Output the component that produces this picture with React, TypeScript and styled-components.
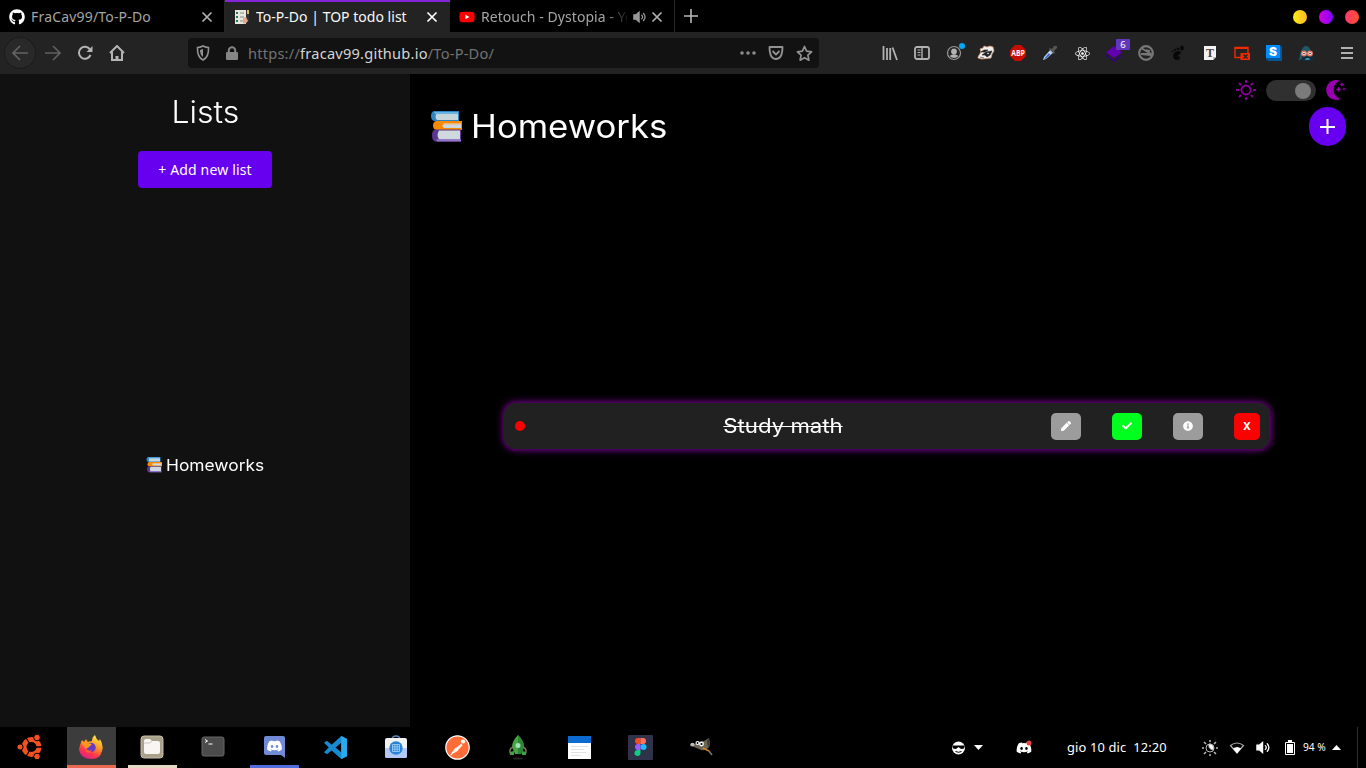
import React from 'react';
import styled, { createGlobalStyle, css } from 'styled-components';
import { FaGithub, FaYoutube, FaDiscord, FaReact, FaInfoCircle, FaCheck, FaPen } from 'react-icons/fa';

const ui = '"Noto Sans", "Open Sans", sans-serif';
const display = 'Inter, "Open Sans", sans-serif';

const Global = createGlobalStyle`
  * { box-sizing: border-box; }
  body { margin: 0; background: #000; color: #fff; font-family: ${ui}; overflow: hidden; }
  svg { display: block; flex: none; }
`;
const Screen = styled.div`width: 1366px; height: 768px; display: flex; flex-direction: column; overflow: hidden;`;

/* window tabs */
const TabStrip = styled.div`height: 32px; display: flex; align-items: stretch; background: #000;`;
const Tab = styled.div<{ $active?: boolean; $width: number }>`
  width: ${p => p.$width}px; display: flex; align-items: center; padding: 2px 0 0 9px; gap: 6px;
  font-size: 14px; color: ${p => (p.$active ? '#f9f9fa' : '#a5a5a5')};
  background: ${p => (p.$active ? '#232323' : '#000')};
  box-shadow: ${p => (p.$active ? 'inset 0 2px #8524db' : 'none')};
  border-right: ${p => (p.$active ? '0' : '1px solid #252525')};
`;
const TabTitle = styled.span<{ $width: number; $spacing: number; $fade?: boolean }>`
  width: ${p => p.$width}px; white-space: nowrap; overflow: hidden; line-height: 22px; letter-spacing: ${p => p.$spacing}px;
  ${p => p.$fade && css`mask-image: linear-gradient(to right, #000 84%, transparent 102%);`}
`;
const TabControls = styled.span`display: flex; align-items: center; gap: 4px;`;
const NewTab = styled.div`width: 32px; display: grid; place-items: center;`;
const WindowControls = styled.div`margin-left: auto; padding: 2px 7px 0 0; display: flex; align-items: center; gap: 12px;`;
const WindowDot = styled.span<{ $from: string; $to: string }>`
  width: 14px; height: 14px; border-radius: 50%; background: linear-gradient(90deg, ${p => p.$from}, ${p => p.$to});
`;
const VideoIcon = styled(FaYoutube)`background: linear-gradient(#fff, #fff) center / 6px 6px no-repeat;`;

/* navigation bar */
const Toolbar = styled.div`height: 42px; display: flex; align-items: center; background: #232323; color: #b1b1b1;`;
const NavGroup = styled.div`display: flex; align-items: center; width: 188px; padding-left: 4px;`;
const NavButton = styled.div<{ $round?: boolean }>`
  width: 32px; height: 32px; display: grid; place-items: center; border-radius: 50%;
  ${p => p.$round && css`background: #292929; box-shadow: inset 0 0 0 1px #1c1c1c; margin-right: 1px;`}
`;
const AddressBar = styled.div`
  width: 631px; height: 30px; border-radius: 4px; background: #121212; display: flex; align-items: center; padding: 0 1px 0 1px;
`;
const BarIcon = styled.div<{ $width?: number }>`width: ${p => p.$width ?? 28}px; display: grid; place-items: center; color: #8b8b8b;`;
const Url = styled.span`flex: 1; color: #727272; font-size: 14.6px; letter-spacing: 0.22px; line-height: 24px; padding-left: 1px; white-space: nowrap;`;
const Host = styled.span`color: #d5d5d5;`;
const Extensions = styled.div`margin-left: auto; padding-right: 44px; display: flex;`;
const Extension = styled.div`width: 32px; height: 32px; display: grid; place-items: center; position: relative;`;
const CountBadge = styled.span`
  position: absolute; left: 18px; top: 2px; width: 14px; height: 11px; background: #6237bd; border-radius: 1px;
  color: #fff; font-size: 9.5px; line-height: 11px; text-align: center;
`;
const MenuSlot = styled.div`width: 32px; margin-left: -35px; margin-right: 3px; display: grid; place-items: center;`;

/* page */
const Page = styled.div`height: 653px; display: flex;`;
const Sidebar = styled.aside`width: 410px; background: #111; display: flex; flex-direction: column; align-items: center;`;
const SidebarTitle = styled.h2`
  margin: 17px 0 0; font: 300 30.5px/42px ${display}; height: 60px; transform: scaleX(1.05);
`;
const AddList = styled.button`
  width: 134px; height: 37px; padding: 0; border: 0; border-radius: 4px; background: #6800f0; color: #fff;
  font: 14px/20px ${ui}; letter-spacing: 0.15px; white-space: nowrap;
`;
const Lists = styled.div`flex: 1; display: flex; align-items: center; padding-top: 14px;`;
const ListItem = styled.div`display: flex; align-items: center; gap: 4px; font: 16px/24px ${display};`;
const ListName = styled.span`width: 98px; transform: scaleX(1.085); transform-origin: left;`;
const Main = styled.main`flex: 1; display: flex; flex-direction: column; background: #000;`;
const ThemeRow = styled.div`height: 33px; display: flex; justify-content: flex-end; align-items: center; gap: 10px; padding-right: 20px;`;
const ThemeIcon = styled.span`padding-bottom: 1px;`;
const Switch = styled.div`
  width: 50px; height: 21px; border-radius: 11px; background: #303030; display: flex; align-items: center; justify-content: flex-end; padding-right: 5px;
`;
const Knob = styled.span`width: 16px; height: 16px; border-radius: 50%; background: #7b7b7b;`;
const Header = styled.header`height: 39px; display: flex; align-items: center; padding: 0 20px; gap: 8px;`;
const Heading = styled.h1`
  margin: 0 auto 0 0; padding: 1px 0 0 1px; font: 400 32px/40px ${display}; transform: scaleX(1.085); transform-origin: left;
`;
const AddTask = styled.button`
  width: 37px; height: 39px; border: 0; padding: 0; border-radius: 19px; background: #6800f0; display: grid; place-items: center;
`;
const Tasks = styled.section`flex: 1; display: flex; align-items: center; justify-content: center; padding-bottom: 21px;`;
const Task = styled.div`
  width: 766px; height: 46px; margin: 0 2px 0 0; border-radius: 12px; background: #212121; display: flex; align-items: center;
  padding: 0 10px 0 11px; box-shadow: 0 0 7px 1px #8200a0;
`;
const Priority = styled.span`width: 10px; height: 10px; border-radius: 50%; background: #f00; margin-top: -1px;`;
const TaskName = styled.span`
  flex: 1; text-align: center; font: 400 20px/26px ${display}; padding-right: 9px; transform: scaleX(1.11);
  text-decoration: line-through; text-decoration-thickness: 1px;
`;
const Actions = styled.div`display: flex; gap: 31px;`;
const Action = styled.button<{ $color: string; $narrow?: boolean }>`
  width: ${p => (p.$narrow ? 26 : 30)}px; height: 27px; border: 0; padding: 0; border-radius: 5px; background: ${p => p.$color};
  color: #fff; display: grid; place-items: center; font: 700 11px/16px ${ui};
`;

/* desktop panel */
const Panel = styled.footer`height: 41px; display: flex; background: #000;`;
const Launchers = styled.div`display: flex; gap: 12px; padding-left: 6px;`;
const Launcher = styled.div<{ $line?: string; $active?: boolean }>`
  width: 49px; display: grid; place-items: center; padding: 0 1px 1px 0; background: ${p => (p.$active ? '#3c3c3c' : 'transparent')};
  box-shadow: ${p => (p.$line ? `inset 0 -3px ${p.$line}` : 'none')};
`;
const Tray = styled.div`margin-left: auto; width: 415px; display: flex; align-items: center; font-size: 12.9px; white-space: nowrap;`;
const TrayItem = styled.div<{ $width: number }>`width: ${p => p.$width}px; display: flex; align-items: center;`;
const Clock = styled.span`letter-spacing: 0.13px; padding-bottom: 1px;`;
const Battery = styled.span`font-size: 10.2px; width: 24px; padding-bottom: 1px;`;
const PanelEdge = styled.span`width: 1px; height: 41px; background: #303030;`;

const Close = ({ c = '#b1b1b1' }: { c?: string }) => (
  <svg width="12" height="12" viewBox="0 0 12 12" stroke={c} strokeWidth="1.7"><path d="M1.5 1.5l9 9M10.5 1.5l-9 9" /></svg>
);
const Books = ({ size }: { size: number }) => (
  <svg width={size} height={size} viewBox="0 0 32 32">
    <path d="M4 0h25v10H4q-3-1-3-5t3-5" fill="#2f86c4" /><path d="M7 2h21v7H7q-3-3 0-7" fill="#c6d4dc" /><path d="M4 1h24v2H5" fill="#67b3e4" />
    <path d="M6 10h26v9H6q-3-1-3-4.500t3-4.500" fill="#f68a05" /><path d="M14 12h17v5H14q-3-2 0-5" fill="#cfd8dc" /><path d="M14 12h17v1.500H13" fill="#f8b470" />
    <path d="M5 18.500h26V30.500H5q-3-1-3-6t3-6" fill="#5b3790" /><path d="M9 19.500h21v9H9q-3-4 0-9" fill="#cfd8dc" /><path d="M6 28.500h25v2H7" fill="#9575cd" />
  </svg>
);
const Speaker = ({ c = '#999', size = 14 }: { c?: string; size?: number }) => (
  <svg width={size} height={size} viewBox="0 0 16 16" fill="none" stroke={c} strokeWidth="1.400" strokeLinecap="round">
    <path d="M1 5.500h2.500L7 2.500v11l-3.500-3H1z" fill={c} /><path d="M10 6q2 2 0 4M12 4q3.500 4 0 8" />
  </svg>
);

const extensions: { key: string; art: React.ReactNode }[] = [
  { key: 'library', art: <svg width="16" height="16" viewBox="0 0 16 16" stroke="#b1b1b1" strokeWidth="1.800"><path d="M1.500 1v14M5 3v12M8.200 3v12M10.500 2.500L15 15" /></svg> },
  { key: 'sidebar', art: <svg width="16" height="16" viewBox="0 0 16 16" fill="none" stroke="#b1b1b1" strokeWidth="1.800"><rect x="1" y="2" width="14" height="12" rx="2" /><path d="M8 2v12" strokeWidth="1.400" /><path d="M3.500 5h3M3.500 7.500h3M3.500 10h3" strokeWidth="1" /></svg> },
  { key: 'account', art: <svg width="22" height="22" viewBox="0 0 22 22"><circle cx="11" cy="11" r="6.500" fill="none" stroke="#999" strokeWidth="1.200" /><circle cx="11" cy="9.500" r="2.900" fill="#b1b1b1" /><path d="M6.500 14q4.500-3.500 9 0-4.500 4-9 0" fill="#b1b1b1" /><circle cx="19" cy="4" r="3" fill="#00a8fb" /></svg> },
  { key: 'badger', art: <svg width="18" height="16" viewBox="0 0 18 16"><path d="M1 12L4 7 3 4l3-1 1-2 3 1 3-1 3 1 1 4-2 3-1 4-9 1-4-1z" fill="#eee" stroke="#d79a70" strokeWidth=".8" /><path d="M4 7l3-2 4 0-3 2zM5 10l4-3 6-1-2 4-3 2-2-2zM3 12l4 1" fill="#222" stroke="#222" strokeWidth=".6" /><circle cx="11" cy="8.500" r=".8" fill="#fff" /></svg> },
  { key: 'abp', art: <svg width="16" height="16" viewBox="0 0 16 16"><path d="M5 0h6l5 5v6l-5 5H5l-5-5V5z" fill="#c70d00" /><text x="8" y="11" fill="#fff" fontSize="8" fontWeight="700" textAnchor="middle" textLength="13.600" lengthAdjust="spacingAndGlyphs" fontFamily="Open Sans">ABP</text></svg> },
  { key: 'dropper', art: <svg width="16" height="16" viewBox="0 0 16 16"><path d="M1 15l1-3 7-8 3 3-8 7z" fill="#b7cfe9" /><path d="M2.500 13.500l4-5 2 1-5 4.500z" fill="#3c65cf" /><path d="M8 3l2 1 2-3q4-1 3 2l-3 3 1 2-1 1-5-5z" fill="#555" /></svg> },
  { key: 'react', art: <FaReact size={15} color="#fff" /> },
  { key: 'layers', art: <><svg width="18" height="18" viewBox="0 0 18 18"><path d="M1 10l8 6 8-6v2l-8 6-8-6z" fill="#36007b" /><path d="M9 2l8 6.500-8 5.500-8-5.500z" fill="#6000b0" /></svg><CountBadge>6</CountBadge></> },
  { key: 'blocked', art: <svg width="16" height="16" viewBox="0 0 16 16"><circle cx="8" cy="8" r="6.800" fill="none" stroke="#777" strokeWidth="2.200" /><path d="M4 3.500l9 5.500H3l10 1M8 5l4 1" stroke="#777" strokeWidth="1.800" /></svg> },
  { key: 'gnome', art: <svg width="14" height="16" viewBox="0 0 14 16" fill="#080808"><path d="M2.500 9c1-3.500 7-4 7.500-1.500 0 2-3 2-3 3.500 0 1 1.500 0 2 1 0 2-1 3-3 3-3 0-4.500-3-3.500-6" /><ellipse cx="11" cy="3" rx="1.800" ry="2.500" /><circle cx="7" cy="3.800" r="1.400" /><circle cx="4" cy="4.800" r="1.100" /><circle cx="1.700" cy="6.300" r=".9" /></svg> },
  { key: 'text', art: <svg width="14" height="16" viewBox="0 0 14 16"><path d="M1 1h12v11l-3 3H1z" fill="#f3f3f3" /><path d="M10 15v-3h3" fill="#bbb" /><text x="7" y="11.500" textAnchor="middle" fill="#444" fontSize="12" fontWeight="700" fontFamily="Liberation Serif">T</text></svg> },
  { key: 'window', art: <svg width="16" height="16" viewBox="0 0 16 16"><path d="M1 2.500h13v10H1z" fill="none" stroke="#f22900" strokeWidth="1.400" /><path d="M1 3h13" stroke="#f22900" strokeWidth="2" /><path d="M6.500 8h9.500v7H6.500z" fill="#f22900" /><path d="M9.500 9.500l4 4m0-4l-4 4" stroke="#222" strokeWidth="1.300" /></svg> },
  { key: 'stylus', art: <svg width="16" height="16" viewBox="0 0 16 16"><path d="M0 0h14l2 2v14H2l-2-2z" fill="#005799" /><path d="M0 0h14v13H0z" fill="#008cff" /><text x="7" y="11" textAnchor="middle" fill="#fff" fontSize="11.500" fontWeight="900" textLength="8" lengthAdjust="spacingAndGlyphs" fontFamily="Inter">S</text></svg> },
  { key: 'glasses', art: <svg width="17" height="17" viewBox="0 0 17 17"><path d="M1 16Q2 3 7 1q5-1 6 7l-4 6H3z" fill="#24566a" /><path d="M4 11h11l1 5H4z" fill="#172c3b" /><path d="M8 13h3l1 2H7z" fill="#3790a9" /><circle cx="6" cy="8.500" r="2.400" fill="#efe0e0" stroke="#e0705e" strokeWidth="1.200" /><circle cx="12" cy="8.500" r="2.400" fill="#efe0e0" stroke="#e0705e" strokeWidth="1.200" /><circle cx="6" cy="8.500" r=".7" /><circle cx="12" cy="8.500" r=".7" /></svg> },
];

const UbuntuMark = () => (
  <svg width="26" height="26" viewBox="0 0 26 26" fill="none" stroke="#f4511e">
    <circle cx="14.500" cy="13" r="7.500" strokeWidth="5" /><path d="M14.500 13H26M14.500 13L8.800 3M14.500 13L8.800 23" stroke="#000" strokeWidth="1.300" />
    <circle cx="3" cy="13" r="3.100" fill="#f4511e" stroke="#000" /><circle cx="20" cy="3.500" r="3.300" fill="#f4511e" stroke="#000" /><circle cx="20" cy="22.500" r="3.300" fill="#f4511e" stroke="#000" />
  </svg>
);
const DiscordTile = () => (
  <svg width="21" height="22" viewBox="0 0 21 22"><path d="M2 0h17q2 0 2 2v20l-4-3H2q-2 0-2-2V2q0-2 2-2" fill="#718ad6" /><g transform="translate(2.500 2)"><FaDiscord size={16} color="#fff" /></g></svg>
);

const launchers: { key: string; line?: string; active?: boolean; art: React.ReactNode }[] = [
  { key: 'ubuntu', art: <UbuntuMark /> },
  { key: 'firefox', line: '#e96950', active: true, art: <svg width="24" height="25" viewBox="0 0 24 25">
    <defs><linearGradient id="fox" x1=".8" y1="0" x2=".3" y2="1"><stop stopColor="#fff04f" /><stop offset=".42" stopColor="#ff981f" /><stop offset=".75" stopColor="#ff344f" /><stop offset="1" stopColor="#dc1d8b" /></linearGradient></defs>
    <path d="M1 10l2-5 2 2 2-3 1 3 5-1q0-4 3-6 1 4 4 6l1-2q4 7 2 12-2 8-10 8Q1 24 0 14z" fill="url(#fox)" /><circle cx="12" cy="12.500" r="4.700" fill="#663ac5" /><path d="M2 6l3 1 3-2 1 3 4 1-3 3q-2 1-3 2l-3-4z" fill="#ff961f" /><path d="M7 12q1 5 6 3-2 5-7 1" fill="#ff5a34" /></svg> },
  { key: 'files', line: '#e4dac4', art: <svg width="24" height="24" viewBox="0 0 24 24"><rect x="1" y="1" width="22" height="22" rx="3" fill="#aaa18c" stroke="#c5bda6" /><path d="M4 6q0-2 2-2h4l2 2h6q2 0 2 2v9q0 2-2 2H6q-2 0-2-2z" fill="#f7f6f2" /><path d="M4 8h6l2-2" fill="none" stroke="#ccc8bd" /></svg> },
  { key: 'terminal', art: <svg width="24" height="22" viewBox="0 0 24 22"><rect x="1" y="1" width="22" height="19" rx="2" fill="#4b4b4b" stroke="#666" /><path d="M4 3.500l2.500 1.500L4 6.500M7.500 8h4" fill="none" stroke="#fff" /></svg> },
  { key: 'discord', line: '#506ddc', art: <DiscordTile /> },
  { key: 'code', art: <svg width="23" height="23" viewBox="0 0 24 24"><path d="M18 0l6 3v18l-6 3-10-9-5 4-3-2 5-5-5-5 3-2 5 4zM18 7l-6 5 6 5z" fill="#168bd2" fillRule="evenodd" /><path d="M18 0l6 3v18l-6 3z" fill="#2aabf0" /></svg> },
  { key: 'store', art: <svg width="24" height="24" viewBox="0 0 24 24"><path d="M8 5q0-4 4-4t4 4" fill="none" stroke="#6684bd" strokeWidth="1.500" /><rect x="1" y="3" width="22" height="20" rx="2" fill="#f1f1f1" /><path d="M1 13h22v8q0 2-2 2H3q-2 0-2-2z" fill="#b4c8f7" /><circle cx="12" cy="13" r="6.700" fill="#2683d5" /><path d="M8.500 9.500h7v7h-7zM10.900 9.500v7M13.200 9.500v7M8.500 11.900h7M8.500 14.200h7" fill="none" stroke="#9acbf4" strokeWidth=".9" /></svg> },
  { key: 'postman', art: <svg width="25" height="25" viewBox="0 0 25 25"><circle cx="12.500" cy="12.500" r="11.700" fill="#ff6c37" stroke="#fff" strokeWidth="1.200" /><circle cx="18" cy="6.500" r="2.100" fill="#fff" /><path d="M16.500 8.500l1 2-5 5-4 1 3-4z" fill="#fff0e8" /><path d="M11 13l-5 7M13 15l-5 3" fill="none" stroke="#fff3ed" strokeWidth="1.300" /></svg> },
  { key: 'robo', art: <svg width="20" height="25" viewBox="0 0 20 25"><path d="M10 0q6 6 6 12l-3 7H7l-3-7q0-6 6-12" fill="#45a642" /><path d="M10 0q6 6 6 12l-3 7h-3" fill="#2e8737" /><path d="M5 12q-5 2-2 8M15 12q5 2 2 8" fill="none" stroke="#837958" strokeWidth="1.500" /><path d="M2 17l4-1v4H3zM18 17l-4-1v4h3z" fill="#39a544" /><circle cx="10" cy="10.500" r="2.500" fill="#9ee0b9" /><ellipse cx="10" cy="23.500" rx="5" ry="1" fill="#252525" /></svg> },
  { key: 'notes', art: <svg width="23" height="23" viewBox="0 0 23 23"><path d="M0 0h23v23H0z" fill="#fff" /><path d="M0 0h23v7H0z" fill="#0b6bd0" /><path d="M3 10.500h17M3 13.500h13M3 16.500h15M3 19.500h10" stroke="#e2e2e2" /></svg> },
  { key: 'figma', art: <svg width="25" height="25" viewBox="0 0 25 25"><rect width="25" height="25" rx="1" fill="#30324a" /><path d="M12.500 3H10a3 3 0 000 6h2.500z" fill="#f24e1e" /><path d="M12.500 3H15a3 3 0 010 6h-2.500z" fill="#ff7262" /><path d="M12.500 9H10a3 3 0 000 6h2.500z" fill="#a259ff" /><circle cx="15.500" cy="12" r="3" fill="#1abcfe" /><path d="M12.500 15H10a3 3 0 102.500 3z" fill="#0acf83" /></svg> },
  { key: 'gimp', art: <svg width="25" height="24" viewBox="0 0 25 24"><path d="M2 8l4 1 3-2 6-1 5-3q2 8-1 10-4 4-9 1l-5-2-4-1z" fill="#6c6553" /><path d="M18 6l2-3q1 7-1 9" fill="#3b382e" /><ellipse cx="3.500" cy="9.500" rx="2" ry="1.800" fill="#bbb" /><circle cx="8.500" cy="8" r="2" fill="#fff" /><circle cx="12.500" cy="9" r="2.400" fill="#fff" /><circle cx="8.500" cy="8" r=".9" /><circle cx="12.500" cy="9" r="1.100" /><path d="M14 13l6 3" stroke="#dc852d" strokeWidth="1.500" /><path d="M20 16l3 4" stroke="#777" strokeWidth="1.500" /></svg> },
];

export default function App() {
  return (
    <Screen>
      <Global />
      <TabStrip>
        <Tab $width={225}><FaGithub size={16} color="#fff" /><TabTitle $width={164} $spacing={0.18}>FraCav99/To-P-Do</TabTitle><Close /></Tab>
        <Tab $width={225} $active>
          <svg width="16" height="16" viewBox="0 0 16 16"><path d="M1 1h11v14H1z" fill="#e8e8df" /><path d="M2 3h2v2H2zM2 7h2v2H2zM2 11h2v2H2z" fill="#28775a" /><path d="M6 4h4M6 8h4M6 12h3" stroke="#888" /><path d="M12 1h3v11l-3 3z" fill="#343434" /><path d="M9 9l3-1 2 4-3 3-2-1z" fill="#e3aa8e" /><path d="M13 1h2v4h-2z" fill="#d9bb64" /></svg>
          <TabTitle $width={164} $spacing={0.02}>To-P-Do | TOP todo list</TabTitle><Close c="#fff" />
        </Tab>
        <Tab $width={225}><VideoIcon size={16} color="#f00" />
          <TabTitle $width={146} $spacing={0.06} $fade>Retouch - Dystopia - Yo</TabTitle><TabControls><Speaker /><Close /></TabControls></Tab>
        <NewTab><svg width="16" height="16" stroke="#b9b9b9" strokeWidth="1.600"><path d="M8 1v14M1 8h14" /></svg></NewTab>
        <WindowControls><WindowDot $from="#f9ef10" $to="#ffb52c" /><WindowDot $from="#d600dd" $to="#8000ff" /><WindowDot $from="#ff3974" $to="#ff5128" /></WindowControls>
      </TabStrip>
      <Toolbar>
        <NavGroup>
          <NavButton $round><svg width="16" height="16" fill="none" stroke="#636363" strokeWidth="1.700"><path d="M16 8H1M8 1L1 8l7 7" /></svg></NavButton>
          <NavButton><svg width="16" height="16" fill="none" stroke="#606060" strokeWidth="1.700"><path d="M0 8h15M8 1l7 7-7 7" /></svg></NavButton>
          <NavButton><svg width="16" height="16" fill="none" stroke="#b4b4b4" strokeWidth="2"><path d="M13 4.500A6 6 0 1013.500 10" /><path d="M15.500 1v6h-6z" fill="#b4b4b4" stroke="none" /></svg></NavButton>
          <NavButton><svg width="16" height="16" fill="none" stroke="#b4b4b4" strokeWidth="2"><path d="M1 8l7-7 7 7M3 7v8h10V7" /><path d="M8 15v-4" strokeWidth="3" /></svg></NavButton>
        </NavGroup>
        <AddressBar>
          <BarIcon><svg width="16" height="16" fill="none" stroke="#929292" strokeWidth="1.600"><path d="M8 1q3 1.500 5.500 1.500Q14 12 8 15 2 12 2.500 2.500 5 2.500 8 1z" /><path d="M8 4v8q-3-2-3-7z" fill="#929292" stroke="none" /></svg></BarIcon>
          <BarIcon $width={30}><svg width="14" height="15" fill="#858585"><path d="M2 6h10q1 0 1 1v6q0 1-1 1H2q-1 0-1-1V7q0-1 1-1" /><path d="M3.800 7V4.500a3.200 3.200 0 016.400 0V7" fill="none" stroke="#858585" strokeWidth="2" /></svg></BarIcon>
          <Url>https://<Host>fracav99.github.io</Host>/To-P-Do/</Url>
          <BarIcon><svg width="16" height="4" fill="#8b8b8b"><circle cx="2" cy="2" r="1.800" /><circle cx="8" cy="2" r="1.800" /><circle cx="14" cy="2" r="1.800" /></svg></BarIcon>
          <BarIcon><svg width="16" height="16" fill="none" stroke="#929292" strokeWidth="1.800"><path d="M1.500 2h13q0 12-6.500 12T1.500 2zM4.500 6L8 9.500 11.500 6" strokeLinejoin="round" /></svg></BarIcon>
          <BarIcon><svg width="17" height="17" viewBox="0 0 17 17" fill="none" stroke="#929292" strokeWidth="1.700"><path d="M8.500 1.500l2.100 4.700 5 .600-3.700 3.400 1 5-4.400-2.500-4.400 2.500 1-5-3.700-3.400 5-.600z" strokeLinejoin="round" /></svg></BarIcon>
        </AddressBar>
        <Extensions>{extensions.map(e => <Extension key={e.key}>{e.art}</Extension>)}</Extensions>
        <MenuSlot><svg width="12" height="12" stroke="#b1b1b1" strokeWidth="2"><path d="M0 1h12M0 6h12M0 11h12" /></svg></MenuSlot>
      </Toolbar>
      <Page>
        <Sidebar>
          <SidebarTitle>Lists</SidebarTitle>
          <AddList>+ Add new list</AddList>
          <Lists><ListItem><Books size={16} /><ListName>Homeworks</ListName></ListItem></Lists>
        </Sidebar>
        <Main>
          <ThemeRow>
            <ThemeIcon><svg width="20" height="20" fill="none" stroke="#8d009b" strokeWidth="1.900"><circle cx="10" cy="10" r="4.500" /><path d="M10 0v3M10 17v3M0 10h3M17 10h3M3 3l2 2M15 15l2 2M17 3l-2 2M5 15l-2 2" /></svg></ThemeIcon>
            <Switch><Knob /></Switch>
            <ThemeIcon><svg width="20" height="20" fill="#9a00b1"><path d="M11 0A10 10 0 1014.500 19Q7 16 7.500 9 8 3 14 .800 13 0 11 0" /><path d="M16 2l.8 1.700 1.700.8-1.700.8L16 7l-.8-1.700-1.700-.8 1.700-.8zM12.500 6.500l.9 2 2 .9-2 .9-.9 2-.9-2-2-.9 2-.9zM18 7l.6 1.400L20 9l-1.400.6L18 11l-.6-1.400L16 9l1.400-.6z" /></svg></ThemeIcon>
          </ThemeRow>
          <Header><Books size={32} /><Heading>Homeworks</Heading><AddTask><svg width="15" height="15" stroke="#fff" strokeWidth="2"><path d="M7.500 0v15M0 8h15" /></svg></AddTask></Header>
          <Tasks>
            <Task>
              <Priority /><TaskName>Study math</TaskName>
              <Actions>
                <Action $color="#9c9c9c"><FaPen size={10} /></Action>
                <Action $color="#00ff1e"><FaCheck size={10} /></Action>
                <Action $color="#9c9c9c"><FaInfoCircle size={10} /></Action>
                <Action $color="#f00" $narrow>X</Action>
              </Actions>
            </Task>
          </Tasks>
        </Main>
      </Page>
      <Panel>
        <Launchers>{launchers.map(l => <Launcher key={l.key} $line={l.line} $active={l.active}>{l.art}</Launcher>)}</Launchers>
        <Tray>
          <TrayItem $width={23}><svg width="15" height="14"><circle cx="7.500" cy="7" r="6.500" fill="#fff" /><path d="M1 4.500h13l-1 3-3 .5-2.500-2L5 8l-3-.5z" /><path d="M4.500 10.500q3 1.500 6 0" fill="none" stroke="#000" /></svg></TrayItem>
          <TrayItem $width={42}><svg width="9" height="5"><path d="M0 0h9L4.500 5z" fill="#fff" /></svg></TrayItem>
          <TrayItem $width={51}><svg width="16" height="16"><FaDiscord size={16} color="#fff" /><circle cx="13" cy="3" r="2.500" fill="#ed4245" /></svg></TrayItem>
          <TrayItem $width={135}><Clock>gio 10 dic&nbsp; 12:20</Clock></TrayItem>
          <TrayItem $width={27}><svg width="16" height="16" stroke="#bbb"><circle cx="8" cy="8" r="4" fill="none" /><path d="M7 4a4 4 0 014 6Q6 9 7 4" fill="#fff" /><path d="M8 0v2M8 14v2M0 8h2M14 8h2M2 2l2 2M12 12l2 2M14 2l-2 2M4 12l-2 2" strokeWidth="1.500" /></svg></TrayItem>
          <TrayItem $width={27}><svg width="16" height="14"><path d="M1.500 4.500Q8-.500 14.500 4.500L8 12z" fill="none" stroke="#aaa" strokeWidth="1.200" /><path d="M4 7.500q4-3 8 0L8 12.500z" fill="#fff" /></svg></TrayItem>
          <TrayItem $width={29}><Speaker c="#fff" size={15} /></TrayItem>
          <TrayItem $width={18}><svg width="10" height="15"><path d="M.5 2.500h9v12h-9z" fill="#000" stroke="#fff" /><path d="M3 0h4v2H3zM2 4h6v9H2z" fill="#fff" /></svg></TrayItem>
          <TrayItem $width={54}><Battery>94 %</Battery><svg width="14" height="5"><path d="M5 5h9L9.500 0z" fill="#fff" /></svg></TrayItem>
          <PanelEdge />
        </Tray>
      </Panel>
    </Screen>
  );
}
